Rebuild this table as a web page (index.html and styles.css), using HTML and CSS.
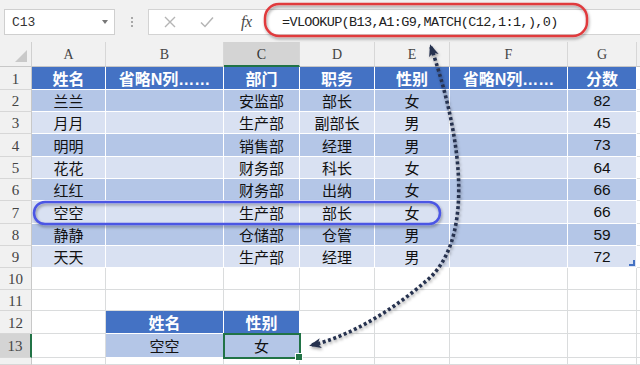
FILE: index.html
```html
<!DOCTYPE html>
<html lang="zh-CN">
<head>
<meta charset="utf-8">
<link rel="stylesheet" href="styles.css">
</head>
<body>
<div class="app">
  <div class="fbar">
    <div class="namebox"><span class="ref">C13</span><span class="caret"></span></div>
    <div class="grip"><i></i><i></i><i></i></div>
    <div class="fbox">
      <div class="btns">
        <svg class="ic" width="14" height="14" viewBox="0 0 14 14"><path d="M2 2 L12 12 M12 2 L2 12" stroke="#b5b5b5" stroke-width="1.4" fill="none"/></svg>
        <svg class="ic" width="16" height="14" viewBox="0 0 16 14"><path d="M2 7.5 L6 11.5 L14 2.5" stroke="#b5b5b5" stroke-width="1.5" fill="none"/></svg>
        <span class="fx">fx</span>
      </div>
      <div class="formula">=VLOOKUP(B13,A1:G9,MATCH(C12,1:1,),0)</div>
    </div>
  </div>

  <div class="sheet">
    <div class="corner"><i class="tri"></i></div>
    <div class="ch">A</div><div class="ch">B</div><div class="ch selc">C</div><div class="ch">D</div><div class="ch">E</div><div class="ch">F</div><div class="ch">G</div><div class="ch end"></div>

    <div class="rh">1</div>
    <div class="c th">姓名</div><div class="c th">省略N列……</div><div class="c th">部门</div><div class="c th">职务</div><div class="c th">性别</div><div class="c th">省略N列……</div><div class="c th">分数</div><div class="e end"></div>

    <div class="rh">2</div>
    <div class="c dk">兰兰</div><div class="c dk"></div><div class="c dk">安监部</div><div class="c dk">部长</div><div class="c dk">女</div><div class="c dk"></div><div class="c dk num">82</div><div class="e end"></div>

    <div class="rh">3</div>
    <div class="c lt">月月</div><div class="c lt"></div><div class="c lt">生产部</div><div class="c lt">副部长</div><div class="c lt">男</div><div class="c lt"></div><div class="c lt num">45</div><div class="e end"></div>

    <div class="rh">4</div>
    <div class="c dk">明明</div><div class="c dk"></div><div class="c dk">销售部</div><div class="c dk">经理</div><div class="c dk">男</div><div class="c dk"></div><div class="c dk num">73</div><div class="e end"></div>

    <div class="rh">5</div>
    <div class="c lt">花花</div><div class="c lt"></div><div class="c lt">财务部</div><div class="c lt">科长</div><div class="c lt">女</div><div class="c lt"></div><div class="c lt num">64</div><div class="e end"></div>

    <div class="rh">6</div>
    <div class="c dk">红红</div><div class="c dk"></div><div class="c dk">财务部</div><div class="c dk">出纳</div><div class="c dk">女</div><div class="c dk"></div><div class="c dk num">66</div><div class="e end"></div>

    <div class="rh">7</div>
    <div class="c lt">空空</div><div class="c lt"></div><div class="c lt">生产部</div><div class="c lt">部长</div><div class="c lt">女</div><div class="c lt"></div><div class="c lt num">66</div><div class="e end"></div>

    <div class="rh">8</div>
    <div class="c dk">静静</div><div class="c dk"></div><div class="c dk">仓储部</div><div class="c dk">仓管</div><div class="c dk">男</div><div class="c dk"></div><div class="c dk num">59</div><div class="e end"></div>

    <div class="rh">9</div>
    <div class="c lt">天天</div><div class="c lt"></div><div class="c lt">生产部</div><div class="c lt">经理</div><div class="c lt">男</div><div class="c lt"></div><div class="c lt num last">72</div><div class="e end"></div>

    <div class="rh">10</div>
    <div class="e"></div><div class="e"></div><div class="e"></div><div class="e"></div><div class="e"></div><div class="e"></div><div class="e"></div><div class="e end"></div>

    <div class="rh">11</div>
    <div class="e"></div><div class="e"></div><div class="e"></div><div class="e"></div><div class="e"></div><div class="e"></div><div class="e"></div><div class="e end"></div>

    <div class="rh">12</div>
    <div class="e"></div><div class="c th">姓名</div><div class="c th">性别</div><div class="e"></div><div class="e"></div><div class="e"></div><div class="e"></div><div class="e end"></div>

    <div class="rh selr">13</div>
    <div class="e"></div><div class="c dk">空空</div><div class="c dk sel">女</div><div class="e"></div><div class="e"></div><div class="e"></div><div class="e"></div><div class="e end"></div>

    <div class="rh"></div>
    <div class="e"></div><div class="e"></div><div class="e"></div><div class="e"></div><div class="e"></div><div class="e"></div><div class="e"></div><div class="e end"></div>
  </div>

  <svg class="overlay" width="640" height="365" viewBox="0 0 640 365">
    <defs>
      <filter id="sh" x="-10%" y="-30%" width="120%" height="170%">
        <feDropShadow dx="1" dy="2" stdDeviation="1.4" flood-color="#000" flood-opacity="0.35"/>
      </filter>
      <marker id="ah" markerUnits="userSpaceOnUse" markerWidth="14" markerHeight="12" refX="9" refY="6" orient="auto-start-reverse">
        <path d="M0,1 L12,6 L0,11 L3,6 Z" fill="#283350"/>
      </marker>
    </defs>
    <rect x="265" y="4" width="322" height="32" rx="14" fill="none" stroke="#e03a3e" stroke-width="2.5" filter="url(#sh)"/>
    <rect x="34" y="202" width="406" height="22" rx="11" fill="none" stroke="#4b56e4" stroke-width="2.5" filter="url(#sh)"/>
    <path d="M431,47 C466,150 472,245 425,282 C395,308 352,336 312,345" fill="none" stroke="#283350" stroke-width="3.6" stroke-dasharray="3 2.6" marker-start="url(#ah)" marker-end="url(#ah)" filter="url(#sh)"/>
  </svg>
</div>
</body>
</html>
```

FILE: styles.css
```css
* { box-sizing: border-box; margin: 0; padding: 0; }
html, body { width: 640px; height: 365px; overflow: hidden; background: #ffffff; }
body { font-family: "Liberation Sans", "Noto Sans CJK SC", sans-serif; }

.app { position: relative; width: 640px; height: 365px; }

.fbar {
  height: 42px;
  background: #f1f1f1;
  display: flex;
  align-items: flex-start;
  padding: 9px 0 0 4px;
}
.namebox {
  width: 111px;
  height: 26px;
  background: #fff;
  border: 1px solid #cfcfcf;
  display: flex;
  align-items: center;
  justify-content: space-between;
  padding: 0 6px 0 7px;
}
.ref { font-family: "Liberation Mono", monospace; font-size: 13px; color: #333; }
.caret {
  width: 0; height: 0;
  border-left: 3px solid transparent;
  border-right: 3px solid transparent;
  border-top: 4px solid #777;
}
.grip {
  width: 33px;
  height: 26px;
  display: flex;
  flex-direction: column;
  align-items: center;
  justify-content: center;
  gap: 2px;
}
.grip i { width: 2px; height: 2px; background: #a8a8a8; display: block; }
.fbox {
  flex: 1;
  height: 26px;
  background: #fff;
  border: 1px solid #d3d3d3;
  border-right: none;
  display: flex;
  align-items: center;
}
.btns {
  width: 118px;
  display: flex;
  align-items: center;
  padding-left: 14px;
}
.btns .ic { margin-right: 22px; display: block; }
.btns .ic + .ic { margin-right: 26px; }
.fx {
  font-family: "Liberation Serif", serif;
  font-style: italic;
  font-size: 16px;
  color: #4a4a4a;
  letter-spacing: -0.5px;
}
.formula {
  padding-left: 15px;
  font-family: "Liberation Mono", monospace;
  font-size: 13.5px;
  letter-spacing: -0.65px;
  color: #222;
}

.sheet {
  display: grid;
  grid-template-columns: 32px 74px 118px 76px 75px 75px 118px 69px 1fr;
  grid-template-rows: 25px 23px 22px 22px 23px 22px 22px 23px 22px 22px 22px 21px 23px 24px 1fr;
  height: 323px;
}

.corner {
  background: #f1f1f1;
  border-right: 1px solid #d0d0d0;
  border-bottom: 1px solid #c8c8c8;
  display: flex;
  justify-content: flex-end;
  align-items: flex-end;
  padding: 0 4px 4px 0;
}
.tri {
  display: block;
  width: 12px;
  height: 12px;
  background: #c9c9c9;
  clip-path: polygon(100% 0, 100% 100%, 0 100%);
}

.ch {
  background: #f1f1f1;
  border-right: 1px solid #d7d7d7;
  border-bottom: 1px solid #c6c6c6;
  display: flex;
  align-items: flex-end;
  justify-content: center;
  padding-bottom: 3px;
  font-family: "Liberation Serif", serif;
  font-size: 14px;
  color: #444;
}
.ch.selc { background: #d4d4d4; border-bottom: 2px solid #217346; padding-bottom: 2px; color: #333; }
.ch.end { border-right: none; }

.rh {
  background: #f1f1f1;
  border-right: 1px solid #c8c8c8;
  border-bottom: 1px solid #d7d7d7;
  display: flex;
  align-items: center;
  justify-content: center;
  padding-top: 2px;
  font-family: "Liberation Serif", serif;
  font-size: 15px;
  color: #444;
}
.rh.selr { background: #d4d4d4; border-right: 2px solid #217346; }

.c {
  display: flex;
  align-items: center;
  justify-content: center;
  border-right: 1px solid #ffffff;
  border-bottom: 1px solid #ffffff;
  font-size: 15px;
  color: #111;
  white-space: nowrap;
}
.th { background: #4472c4; color: #fff; font-weight: bold; font-size: 16px; }
.dk { background: #b4c6e7; }
.lt { background: #d9e1f2; }
.num { font-size: 15.5px; }
.last { position: relative; }
.last::after {
  content: "";
  position: absolute;
  right: 1px;
  bottom: 1px;
  width: 4px;
  height: 4px;
  border-right: 2px solid #4472c4;
  border-bottom: 2px solid #4472c4;
}

.e {
  border-right: 1px solid #dadcdd;
  border-bottom: 1px solid #dadcdd;
  background: #fff;
}
.e.end { border-right: none; }

.sel { position: relative; z-index: 1; outline: 2px solid #217346; outline-offset: -1px; }
.sel::after {
  content: "";
  position: absolute;
  right: -4px;
  bottom: -4px;
  width: 6px;
  height: 6px;
  background: #217346;
  border: 1px solid #fff;
}

.overlay { position: absolute; left: 0; top: 0; pointer-events: none; }
```
